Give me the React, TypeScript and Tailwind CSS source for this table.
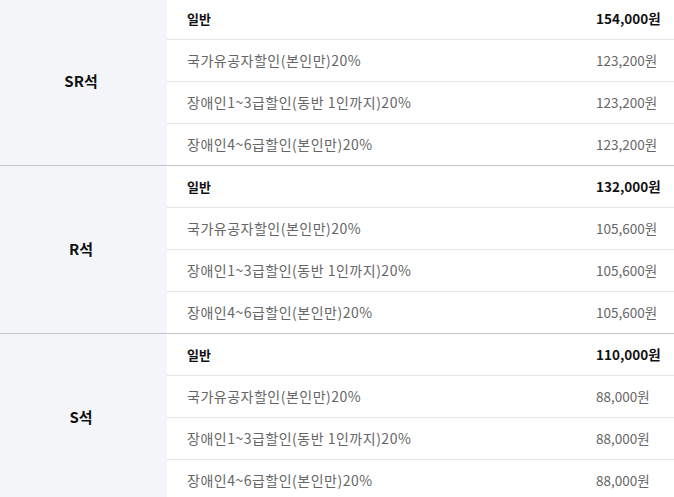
import React from "react";

type Row = { label: string; price: string; bold?: boolean };
type Group = { name: string; rows: Row[] };

const mk = (base: string, disc: string): Row[] => [
  { label: "일반", price: base, bold: true },
  { label: "국가유공자할인(본인만)20%", price: disc },
  { label: "장애인1~3급할인(동반 1인까지)20%", price: disc },
  { label: "장애인4~6급할인(본인만)20%", price: disc },
];

const groups: Group[] = [
  { name: "SR석", rows: mk("154,000원", "123,200원") },
  { name: "R석", rows: mk("132,000원", "105,600원") },
  { name: "S석", rows: mk("110,000원", "88,000원") },
];

export default function App() {
  return (
    <div
      className="w-[674px] h-[497px] overflow-hidden bg-white"
      style={{ fontFamily: '"Noto Sans CJK KR", "Noto Sans", sans-serif' }}
    >
      <div className="-mt-[2px]">
        {groups.map((g) => (
          <div key={g.name} className="flex border-b border-[#c6c7cc]">
            <div className="w-[167px] shrink-0 bg-[#f4f5f9] flex items-center justify-center pr-[5px] text-[15px] font-bold text-[#111]">
              {g.name}
            </div>
            <div className="flex-1">
              {g.rows.map((r, i) => (
                <div
                  key={i}
                  className="h-[42px] last:h-[41px] border-b last:border-b-0 border-[#e4e4e9] flex items-center pl-[20px]"
                >
                  <span
                    className={
                      r.bold
                        ? "flex-1 text-[13px] font-bold text-[#111]"
                        : "flex-1 text-[14px] tracking-[0.5px] text-[#666]"
                    }
                  >
                    {r.label}
                  </span>
                  <span
                    className={
                      r.bold
                        ? "w-[78px] text-[13.5px] font-bold text-[#111]"
                        : "w-[78px] text-[13.5px] text-[#666]"
                    }
                  >
                    {r.price}
                  </span>
                </div>
              ))}
            </div>
          </div>
        ))}
      </div>
    </div>
  );
}
